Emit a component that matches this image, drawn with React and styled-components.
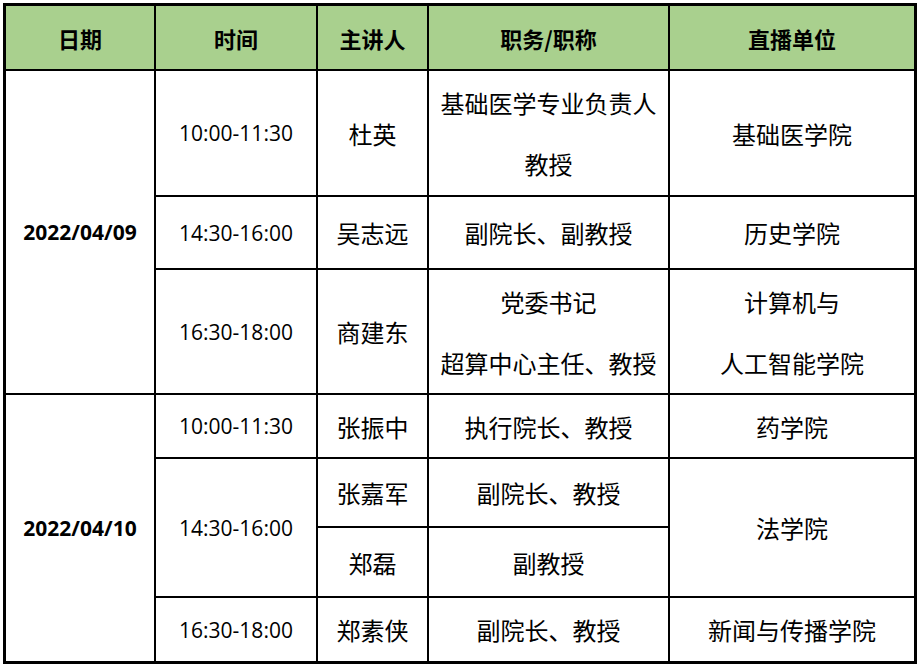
import React from 'react';
import styled, { createGlobalStyle } from 'styled-components';

const GlobalStyle = createGlobalStyle`
  html, body {
    margin: 0;
    padding: 0;
    background: #ffffff;
  }
  body {
    padding: 3px;
    font-family: "Open Sans", "Noto Sans CJK SC", sans-serif;
    color: #000000;
  }
`;

const Table = styled.div`
  display: grid;
  width: 908px;
  grid-template-columns: 148px 160px 109px 239px 244px;
  grid-template-rows: 63px 124px 71px 123px 62px 67px 68px 63px;
  gap: 2px;
  background: #000000;
  border: 3px solid #000000;
`;

const HeadCell = styled.div`
  background: #a9d08e;
  display: flex;
  align-items: center;
  justify-content: center;
  font-family: "Noto Sans CJK SC", sans-serif;
  font-weight: 700;
  font-size: 22px;
`;

const Cell = styled.div`
  grid-row: span ${props => props.rows || 1};
  background: #ffffff;
  display: flex;
  flex-direction: column;
  align-items: center;
  justify-content: center;
  text-align: center;
  font-size: ${props => (props.kind === 'time' || props.kind === 'date' ? '21px' : '24px')};
  font-weight: ${props => (props.kind === 'date' ? 700 : 400)};
  font-family: ${props =>
    props.kind === 'time' || props.kind === 'date'
      ? '"Open Sans", "Noto Sans CJK SC", sans-serif'
      : '"Noto Sans CJK SC", sans-serif'};
`;

const Line = styled.div`
  line-height: ${props => (props.tall ? '61px' : '1.3')};
  white-space: nowrap;
`;

const headers = ['日期', '时间', '主讲人', '职务/职称', '直播单位'];

const Text = ({ lines }) =>
  lines.map((line, i) => (
    <Line key={i} tall={lines.length > 1}>
      {line}
    </Line>
  ));

const App = () => {
  return (
    <>
      <GlobalStyle />
      <Table>
        {headers.map(h => (
          <HeadCell key={h}>{h}</HeadCell>
        ))}

        {/* 4月9日 */}
        <Cell kind="date" rows={3}>2022/04/09</Cell>
        <Cell kind="time">10:00-11:30</Cell>
        <Cell>杜英</Cell>
        <Cell><Text lines={['基础医学专业负责人', '教授']} /></Cell>
        <Cell>基础医学院</Cell>

        <Cell kind="time">14:30-16:00</Cell>
        <Cell>吴志远</Cell>
        <Cell>副院长、副教授</Cell>
        <Cell>历史学院</Cell>

        <Cell kind="time">16:30-18:00</Cell>
        <Cell>商建东</Cell>
        <Cell><Text lines={['党委书记', '超算中心主任、教授']} /></Cell>
        <Cell><Text lines={['计算机与', '人工智能学院']} /></Cell>

        {/* 4月10日 */}
        <Cell kind="date" rows={4}>2022/04/10</Cell>
        <Cell kind="time">10:00-11:30</Cell>
        <Cell>张振中</Cell>
        <Cell>执行院长、教授</Cell>
        <Cell>药学院</Cell>

        <Cell kind="time" rows={2}>14:30-16:00</Cell>
        <Cell>张嘉军</Cell>
        <Cell>副院长、教授</Cell>
        <Cell rows={2}>法学院</Cell>

        <Cell>郑磊</Cell>
        <Cell>副教授</Cell>

        <Cell kind="time">16:30-18:00</Cell>
        <Cell>郑素侠</Cell>
        <Cell>副院长、教授</Cell>
        <Cell>新闻与传播学院</Cell>
      </Table>
    </>
  );
};

export default App;
